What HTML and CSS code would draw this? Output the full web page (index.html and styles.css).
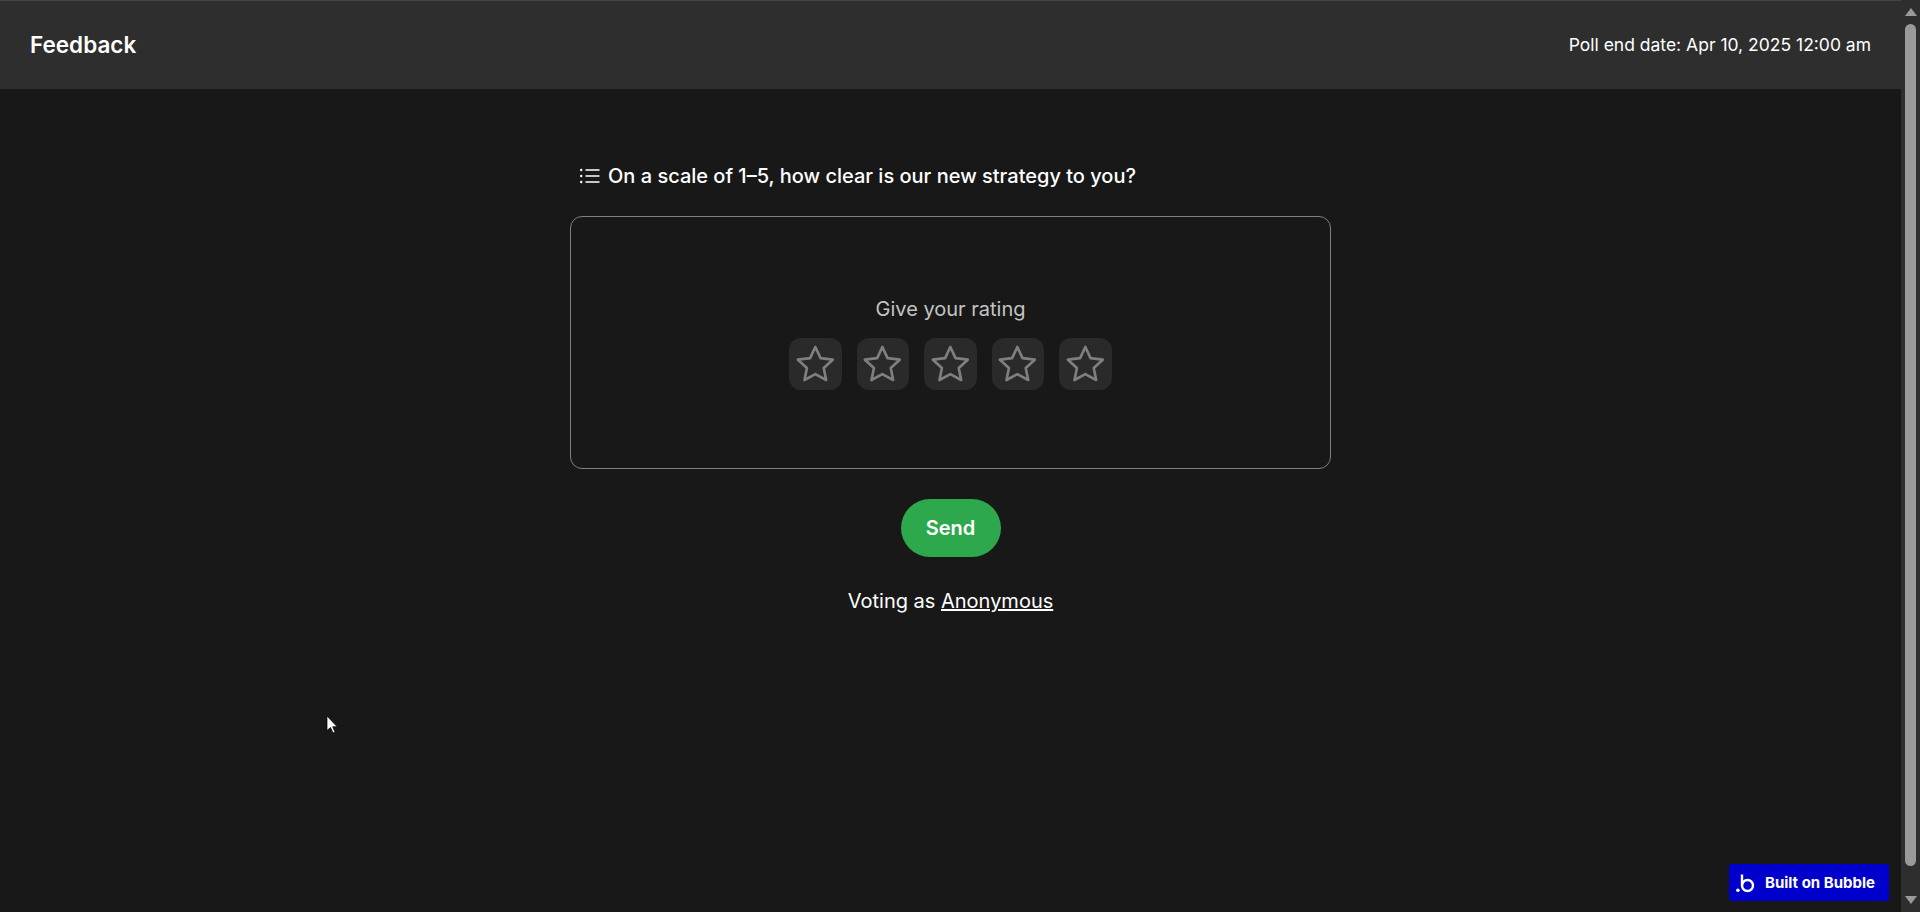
FILE: index.html
```html
<!DOCTYPE html>
<html lang="en">
  <head>
    <meta charset="UTF-8" />
    <meta name="viewport" content="width=device-width, initial-scale=1.0" />
    <title>Feedback</title>
    <link rel="stylesheet" href="styles.css">
  </head>
  <body>
    <div class="page">
      <div class="main">
        <header class="topbar">
          <h1>Feedback</h1>
          <span class="end-date">Poll end date: Apr 10, 2025 12:00 am</span>
        </header>
        <div class="poll">
          <div class="question">
            <svg class="list-icon" width="20" height="16" viewBox="0 0 20 16" fill="none">
              <circle cx="1.2" cy="2" r="1.2" fill="#fff" />
              <circle cx="1.2" cy="8" r="1.2" fill="#fff" />
              <circle cx="1.2" cy="14" r="1.2" fill="#fff" />
              <path d="M5.5 2H19.5M5.5 8H19.5M5.5 14H19.5" stroke="#fff" stroke-width="1.3" />
            </svg>
            <span>On a scale of 1–5, how clear is our new strategy to you?</span>
          </div>
          <div class="card">
            <p class="rating-label">Give your rating</p>
            <div class="stars">
              <button class="star"><svg width="42" height="40" viewBox="0.6 0 38 36"><path class="star-path" d="M19 2.6l4.7 10.100 11.100 1.400-8.200 7.500 2.200 10.900L19 27.100 9.200 32.500l2.200-10.900-8.200-7.500 11.100-1.400z" /></svg></button>
              <button class="star"><svg width="42" height="40" viewBox="0.6 0 38 36"><path class="star-path" d="M19 2.6l4.7 10.100 11.100 1.400-8.200 7.500 2.200 10.900L19 27.100 9.200 32.500l2.200-10.900-8.200-7.500 11.100-1.400z" /></svg></button>
              <button class="star"><svg width="42" height="40" viewBox="0.6 0 38 36"><path class="star-path" d="M19 2.6l4.7 10.100 11.100 1.400-8.200 7.500 2.200 10.900L19 27.100 9.200 32.500l2.200-10.900-8.200-7.500 11.100-1.400z" /></svg></button>
              <button class="star"><svg width="42" height="40" viewBox="0.6 0 38 36"><path class="star-path" d="M19 2.6l4.7 10.100 11.100 1.400-8.200 7.500 2.200 10.900L19 27.100 9.200 32.500l2.200-10.900-8.200-7.500 11.100-1.400z" /></svg></button>
              <button class="star"><svg width="42" height="40" viewBox="0.6 0 38 36"><path class="star-path" d="M19 2.6l4.7 10.100 11.100 1.400-8.200 7.500 2.200 10.900L19 27.100 9.200 32.500l2.200-10.900-8.200-7.500 11.100-1.400z" /></svg></button>
            </div>
          </div>
          <button class="send">Send</button>
          <p class="voter">Voting as <a href="#">Anonymous</a></p>
        </div>
      </div>
      <div class="scrollbar">
        <span class="arrow-up"></span>
        <span class="thumb"></span>
        <span class="arrow-down"></span>
      </div>
    </div>
    <a class="bubble" href="#">
      <svg width="20" height="20" viewBox="0 0 20 20" fill="none">
        <circle cx="1.900" cy="17.200" r="1.800" fill="#fff" />
        <path d="M6 1.500V12.500" stroke="#fff" stroke-width="2.400" />
        <circle cx="11.500" cy="12.500" r="5.500" stroke="#fff" stroke-width="2.400" />
      </svg>
      <span>Built on Bubble</span>
    </a>
    <svg class="cursor" width="12" height="20" viewBox="0 0 12 20">
      <path d="M1 1V15.500L4.500 12.500L7 18L9 17L6.700 11.800H11.200Z" fill="#fff" stroke="#000" stroke-width="0.7" />
    </svg>
  </body>
</html>
```

FILE: styles.css
```css
html,
body {
  height: 100%;
}
body {
  background-color: #181818;
  color: #fff;
  font-family: Inter, "Liberation Sans", sans-serif;
  margin: 0;
  overflow: hidden;
}
.page {
  display: flex;
  height: 912px;
}
.main {
  flex: 1;
  min-width: 0;
}
.topbar {
  display: flex;
  align-items: center;
  justify-content: space-between;
  box-sizing: border-box;
  height: 89px;
  padding: 0 30px 2px;
  background-color: #2e2e2e;
  border-top: 1px solid #444;
}
.topbar h1 {
  margin: 0;
  font-size: 22.500px;
  font-weight: 600;
}
.end-date {
  font-size: 17.500px;
}
.poll {
  display: flex;
  flex-direction: column;
  align-items: center;
  padding-top: 72px;
}
.question {
  display: flex;
  align-items: center;
  gap: 8px;
  width: 761px;
  height: 30px;
  box-sizing: border-box;
  padding-left: 10px;
  font-size: 20px;
  font-weight: 500;
}
.card {
  display: flex;
  flex-direction: column;
  align-items: center;
  justify-content: center;
  box-sizing: border-box;
  width: 761px;
  height: 253px;
  margin-top: 25px;
  padding-bottom: 2px;
  border: 1px solid #808080;
  border-radius: 12px;
}
.rating-label {
  margin: 0 0 14px;
  color: #c4c4c4;
  font-size: 20px;
  line-height: 30px;
}
.stars {
  display: flex;
  gap: 15px;
}
.star {
  display: flex;
  align-items: center;
  justify-content: center;
  width: 52.500px;
  height: 52px;
  padding: 0;
  background-color: #2a2a2a;
  border: none;
  border-radius: 12px;
}
.star-path {
  fill: none;
  stroke: #7f7f7f;
  stroke-width: 2.400;
  stroke-linejoin: round;
}
.send {
  width: 100px;
  height: 58px;
  margin-top: 30px;
  background-color: #2ea84c;
  color: #fff;
  font-family: inherit;
  font-size: 20px;
  font-weight: 600;
  border: none;
  border-radius: 29px;
}
.voter {
  margin: 29px 0 0;
  font-size: 20px;
  line-height: 30px;
}
.voter a {
  color: #fff;
}
.scrollbar {
  display: flex;
  flex-direction: column;
  align-items: center;
  width: 19px;
  background-color: #2e2e2e;
}
.arrow-up,
.arrow-down {
  width: 0;
  height: 0;
  border-left: 6px solid transparent;
  border-right: 6px solid transparent;
}
.arrow-up {
  margin-top: 8px;
  border-bottom: 8px solid #9a9a9a;
}
.arrow-down {
  margin-bottom: 8px;
  border-top: 8px solid #9a9a9a;
}
.thumb {
  flex: 1;
  width: 11px;
  margin: 8px 0 30px;
  background-color: #9a9a9a;
  border-radius: 6px;
}
.bubble {
  position: absolute;
  left: 1729px;
  top: 864px;
  display: flex;
  align-items: center;
  gap: 9px;
  box-sizing: border-box;
  width: 160px;
  height: 37px;
  padding-left: 7px;
  background-color: #0000cc;
  color: #fff;
  font-size: 15px;
  font-weight: 700;
  text-decoration: none;
  border-radius: 3px;
}
.cursor {
  position: absolute;
  left: 326px;
  top: 715px;
}
```
